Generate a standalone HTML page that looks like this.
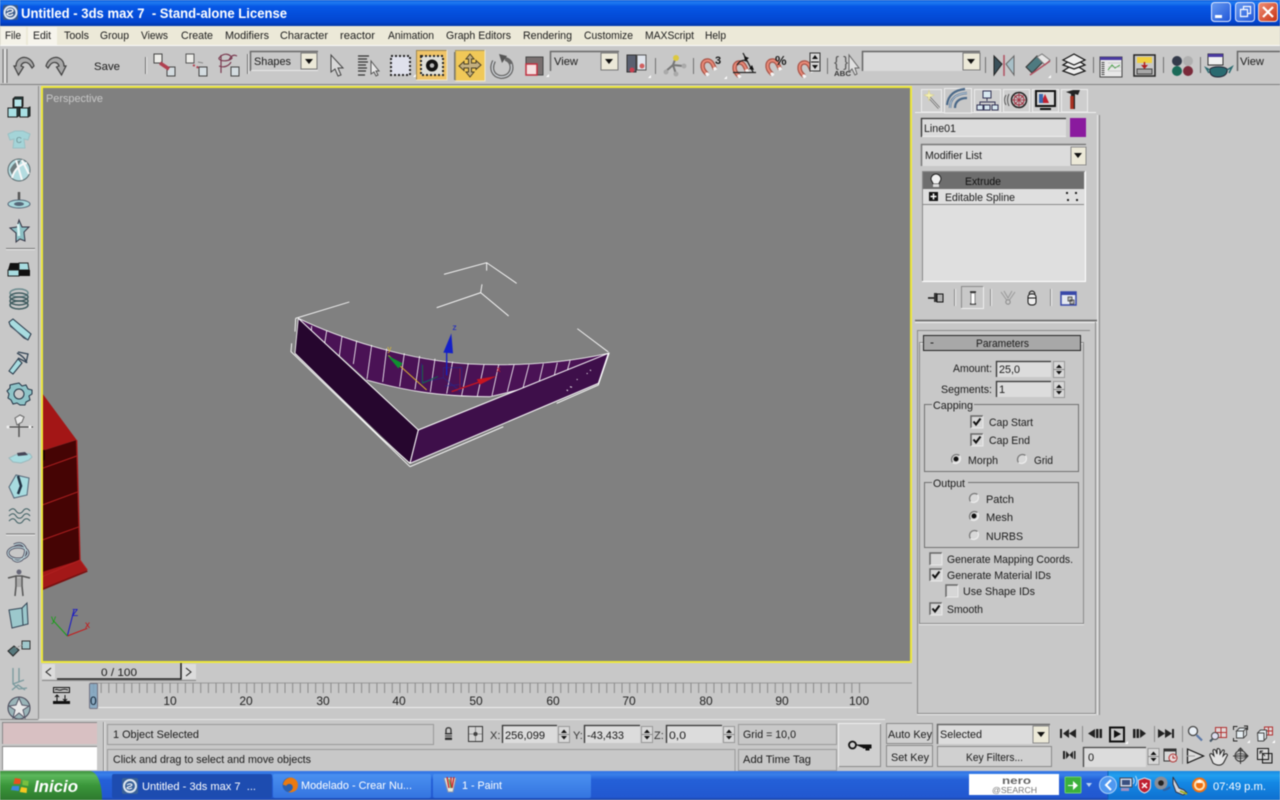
<!DOCTYPE html>
<html><head><meta charset="utf-8"><title>Untitled - 3ds max 7</title>
<style>
html,body{margin:0;padding:0;background:#c8c8c8;overflow:hidden}
svg{display:block;filter:blur(.4px)}
text{font-family:"Liberation Sans",sans-serif;font-size:11px;fill:#1a1a1a}
.w{fill:#fff}
</style></head><body>
<svg width="1280" height="800" viewBox="0 0 1280 800" xmlns="http://www.w3.org/2000/svg">
<defs>
<linearGradient id="tb" x1="0" y1="0" x2="0" y2="1"><stop offset="0" stop-color="#0a5be0"/><stop offset=".1" stop-color="#1f7bf0"/><stop offset=".25" stop-color="#0657e6"/><stop offset=".85" stop-color="#0345cf"/><stop offset="1" stop-color="#0236a8"/></linearGradient>
<linearGradient id="task" x1="0" y1="0" x2="0" y2="1"><stop offset="0" stop-color="#2b6fe0"/><stop offset=".12" stop-color="#3a80ea"/><stop offset=".3" stop-color="#2460d8"/><stop offset=".9" stop-color="#2258d0"/><stop offset="1" stop-color="#1a45a8"/></linearGradient>
<linearGradient id="tray" x1="0" y1="0" x2="0" y2="1"><stop offset="0" stop-color="#1a88e0"/><stop offset=".15" stop-color="#22a0f0"/><stop offset=".4" stop-color="#1488e4"/><stop offset="1" stop-color="#0f70d0"/></linearGradient>
<linearGradient id="start" x1="0" y1="0" x2="0" y2="1"><stop offset="0" stop-color="#3c8e3c"/><stop offset=".15" stop-color="#5cb85c"/><stop offset=".5" stop-color="#3a963a"/><stop offset="1" stop-color="#2e7a2e"/></linearGradient>
<linearGradient id="tbtn" x1="0" y1="0" x2="0" y2="1"><stop offset="0" stop-color="#4a90f0"/><stop offset="1" stop-color="#3474e0"/></linearGradient>
<linearGradient id="xb" x1="0" y1="0" x2="1" y2="1"><stop offset="0" stop-color="#f09078"/><stop offset="1" stop-color="#c83010"/></linearGradient>
<linearGradient id="bb" x1="0" y1="0" x2="1" y2="1"><stop offset="0" stop-color="#6a9cf0"/><stop offset="1" stop-color="#1f55d8"/></linearGradient>
<g id="spin"><rect width="11" height="16" fill="#d8d8d8" stroke="#989898"/><path d="M5.500 3l3 3.500h-6zM5.500 13l3-3.500h-6z" fill="#111"/><path d="M0 8h11" stroke="#888"/></g>
<g id="cb"><rect width="12" height="12" fill="#d6d6d6"/><path d="M0 12V0h12" fill="none" stroke="#666" stroke-width="1.500"/><path d="M12 0v12H0" fill="none" stroke="#e8e8e8"/></g>
<path id="tick" d="M2.500 5.500l2.500 3 4.500-6" fill="none" stroke="#111" stroke-width="2"/>
<g id="rad"><circle r="5" fill="#d8d8d8"/><path d="M-3.500 3.500A5 5 0 0 1 3.500-3.500" fill="none" stroke="#777" stroke-width="1.300"/><path d="M3.500-3.500A5 5 0 0 1-3.500 3.500" fill="none" stroke="#f0f0f0"/></g>
<g id="mag"><path d="M7 15C0 9 2 1 8 1.500 12 2 13 6 15 10" fill="none" stroke="#a85448" stroke-width="4.500"/><path d="M7 15C0 9 2 1 8 1.500 12 2 13 6 15 10" fill="none" stroke="#e88a78" stroke-width="2"/><path d="M6 14l2.500 2.500M13.500 10.500l3-1.500" stroke="#f4f4f4" stroke-width="3"/></g>
</defs>

<!-- Base -->
<rect width="1280" height="800" fill="#c8c8c8"/>

<!-- Title bar -->
<rect width="1280" height="26" fill="url(#tb)"/>
<rect x="3" y="5" width="15" height="15" rx="2" fill="#3a5a88"/>
<circle cx="10.500" cy="12.500" r="6" fill="none" stroke="#dfe8f4" stroke-width="2"/>
<path d="M7 11c2-3 6-2 6 0-1 2-5 1-6 3 1 2 4 2 6 0" fill="none" stroke="#fff" stroke-width="1.300"/>
<text x="21" y="18" textLength="266" lengthAdjust="spacingAndGlyphs" xml:space="preserve" style="font-size:13.500px;font-weight:bold;fill:#fff">Untitled - 3ds max 7  - Stand-alone License</text>
<rect x="1211.500" y="2.500" width="19" height="19" rx="3" fill="url(#bb)" stroke="#dfe8ff"/>
<rect x="1215" y="15" width="7" height="3" fill="#fff"/>
<rect x="1235.500" y="2.500" width="19" height="19" rx="3" fill="url(#bb)" stroke="#dfe8ff"/>
<path d="M1240.500 9.500h7v7h-7zM1243.500 9.500v-3h7v7h-3" fill="none" stroke="#fff" stroke-width="1.200"/>
<rect x="1258.500" y="2.500" width="19" height="19" rx="3" fill="url(#xb)" stroke="#f4d8d0"/>
<path d="M1263 7l10 10M1273 7l-10 10" stroke="#fff" stroke-width="2.200"/>

<!-- Menu bar -->
<rect y="26" width="1280" height="19" fill="#ece9d8"/>
<rect y="45" width="1280" height="1" fill="#fafafa"/>
<rect x="1" y="27" width="25" height="18" fill="#f4f2e8"/><rect x="28" y="27" width="29" height="18" fill="#f6f4ec"/>
<text x="5" y="39" textLength="16" lengthAdjust="spacingAndGlyphs">File</text>
<text x="33" y="39" textLength="18" lengthAdjust="spacingAndGlyphs">Edit</text>
<text x="64" y="39" textLength="25" lengthAdjust="spacingAndGlyphs">Tools</text>
<text x="100" y="39" textLength="29" lengthAdjust="spacingAndGlyphs">Group</text>
<text x="141" y="39" textLength="27" lengthAdjust="spacingAndGlyphs">Views</text>
<text x="181" y="39" textLength="32" lengthAdjust="spacingAndGlyphs">Create</text>
<text x="225" y="39" textLength="44" lengthAdjust="spacingAndGlyphs">Modifiers</text>
<text x="280" y="39" textLength="48" lengthAdjust="spacingAndGlyphs">Character</text>
<text x="340" y="39" textLength="35" lengthAdjust="spacingAndGlyphs">reactor</text>
<text x="388" y="39" textLength="46" lengthAdjust="spacingAndGlyphs">Animation</text>
<text x="446" y="39" textLength="65" lengthAdjust="spacingAndGlyphs">Graph Editors</text>
<text x="523" y="39" textLength="49" lengthAdjust="spacingAndGlyphs">Rendering</text>
<text x="584" y="39" textLength="49" lengthAdjust="spacingAndGlyphs">Customize</text>
<text x="645" y="39" textLength="49" lengthAdjust="spacingAndGlyphs">MAXScript</text>
<text x="705" y="39" textLength="21" lengthAdjust="spacingAndGlyphs">Help</text>

<!-- Toolbar -->
<rect x="0" y="84" width="1280" height="1" fill="#808080"/>
<path d="M3 49v34M7 49v34" stroke="#707070"/>
<path d="M5 49v34" stroke="#f0f0f0"/>
<g fill="none" stroke="#404040" stroke-width="1.200">
<path d="M14 66l4.500 9 5-8-2.500-1c1-4 6-5 9-1l2 3 2-2c-2-7-8-10-13-8-4 2-5 5-5 8z" fill="#a8a8a8"/>
<path d="M66 66l-4.500 9-5-8 2.500-1c-1-4-6-5-9-1l-2 3-2-2c2-7 8-10 13-8 4 2 5 5 5 8z" fill="#a8a8a8"/>
</g>
<text x="94" y="70" textLength="26" lengthAdjust="spacingAndGlyphs">Save</text>
<path d="M145.500 57v17M247.500 54v20M454.500 52v28M655.500 58v16M693.500 58v16M827.500 58v16M985.500 57v16M1056.500 57v16M1093.500 57v16M1163.500 57v16M1200.500 57v16" stroke="#707070"/>
<path d="M146.500 57v17M248.500 54v20M455.500 52v28" stroke="#efefef"/>
<!-- link icons -->
<rect x="154" y="54" width="8" height="9" fill="#ecece8" stroke="#444"/><rect x="167" y="67" width="8" height="9" fill="#d4dce0" stroke="#444"/>
<path d="M160 63l9 6" stroke="#b04050" stroke-width="3.500"/>
<rect x="186" y="54" width="8" height="9" fill="#ecece8" stroke="#555"/><rect x="199" y="67" width="8" height="9" fill="#d4dce0" stroke="#444"/>
<path d="M193 65l6 3" stroke="#b04050" stroke-width="2" stroke-dasharray="2 2"/><path d="M203 63l-5-1" stroke="#888"/>
<path d="M219 58c5-6 11-4 13 0-2 3-10 4-13 1zM219 66c5 2 10 0 12-4M221 55v18M229 60c3-6 6-5 8-4" fill="none" stroke="#7a3a50" stroke-width="1.200"/>
<rect x="231" y="67" width="8" height="9" fill="#d4dce0" stroke="#444"/>
<!-- Shapes -->
<rect x="250" y="51" width="68" height="20" fill="#c8c8c8"/><path d="M250.500 71V51.500H318" fill="none" stroke="#6a6a6a" stroke-width="1.500"/>
<path d="M251 70.500h67" stroke="#e8e8e8"/>
<text x="254" y="65" textLength="37" lengthAdjust="spacingAndGlyphs">Shapes</text>
<rect x="301" y="53" width="16" height="16" fill="#ece9d8" stroke="#777"/><path d="M305 59h8l-4 5z" fill="#111"/>
<!-- arrow select -->
<path d="M331 55v17l4-3 3 7 3-1-3-7h5z" fill="#d8d8d8" stroke="#444"/>
<path d="M358 56h11M358 59h9M358 62h10M358 65h8M358 68h9M358 71h8M358 75h7" stroke="#333" stroke-width="1.300"/>
<path d="M371 61v13l3-2 2 4 2-1-2-4h3z" fill="#e8e8e8" stroke="#555"/>
<rect x="391" y="56" width="19" height="19" fill="#dfe1ec" stroke="#222" stroke-width="2" stroke-dasharray="2 2"/>
<path d="M413 77h3v-3z" fill="#fff"/>
<rect x="416" y="50" width="31" height="30" fill="#f0c468"/>
<path d="M416.500 80V50.500H447" fill="none" stroke="#a08850"/><path d="M447 50v30H416" fill="none" stroke="#efe4c4"/>
<rect x="421" y="56" width="22" height="19" fill="#dfdfd8" stroke="#222" stroke-width="2" stroke-dasharray="2 2"/>
<circle cx="432" cy="65.500" r="6" fill="#111"/><circle cx="432" cy="65.500" r="2.300" fill="#b8b8b8"/>
<!-- move -->
<rect x="455" y="50" width="30" height="31" fill="#f0c858"/>
<path d="M455.500 81V50.500H485" fill="none" stroke="#a89860"/><path d="M485 50v31H455" fill="none" stroke="#f0e8cc"/>
<path d="M470 54l4 5h-2.500v4H476v-2.500l5 4.500-5 4.500V68h-4.500v4h2.500l-4 5-4-5h2.500v-4H464v2.500L459 66l5-4.500V64h4.500v-5H466z" fill="#c4b080" stroke="#4a4026"/>
<!-- rotate -->
<path d="M494 61c-4 8-1 15 7 16 8 0 12-6 10-13-1-3-4-5-6-5" fill="none" stroke="#666" stroke-width="4"/>
<path d="M494 61c-4 8-1 15 7 16 8 0 12-6 10-13" fill="none" stroke="#d0d4d8" stroke-width="1.400"/>
<path d="M499 54l8 2-5 7z" fill="#555"/>
<!-- scale -->
<rect x="526" y="57" width="17" height="18" fill="#787070" stroke="#444"/><rect x="526" y="64" width="11" height="11" fill="#f4e0e0" stroke="#c03040" stroke-width="1.500"/>
<path d="M546 77h3v-3z" fill="#fff"/>
<!-- View dropdown -->
<rect x="550" y="51" width="69" height="20" fill="#c8c8c8"/><path d="M550.500 71V51.500H619" fill="none" stroke="#6a6a6a" stroke-width="1.500"/>
<text x="554" y="65" textLength="24" lengthAdjust="spacingAndGlyphs">View</text>
<rect x="601" y="53" width="17" height="17" fill="#ece9d8" stroke="#777"/><path d="M605 59h8l-4 5z" fill="#111"/>
<rect x="627" y="55" width="9" height="17" fill="#5a6070" stroke="#333"/><rect x="637" y="55" width="9" height="15" fill="#dfe4ec" stroke="#555"/>
<circle cx="632" cy="70" r="2.500" fill="#c84050"/><circle cx="642" cy="66" r="2.500" fill="#d06060"/>
<path d="M648 78h3v-3z" fill="#fff"/>
<!-- manipulate -->
<path d="M665 72l8-7 3-8M673 65l10 1M673 65l3 9" stroke="#777" stroke-width="2" fill="none"/>
<circle cx="676" cy="58" r="3" fill="#dcc840"/><circle cx="684" cy="66" r="2.500" fill="#aaa"/><circle cx="666" cy="72" r="2.500" fill="#aaa"/><circle cx="676" cy="74" r="2.500" fill="#aaa"/>
<!-- snaps -->
<use href="#mag" x="700" y="59"/>
<text x="715" y="64" style="font-size:11px;font-weight:bold">3</text>
<path d="M724 79h3v-3z" fill="#fff"/>
<use href="#mag" x="732" y="61"/>
<path d="M733 72.500h23M743 53l10 19M737 65c3-5 8-6 11-3" fill="none" stroke="#222" stroke-width="1.300"/>
<path d="M744 56l5 2-4 3zM749 69l3-4 2 5z" fill="#111"/>
<use href="#mag" x="765" y="59"/>
<text x="775" y="65" style="font-size:13px;font-weight:bold">%</text>
<use href="#mag" x="797" y="61"/>
<rect x="810" y="53" width="10" height="18" fill="#d8d8d8" stroke="#333"/><path d="M815 55l3 4h-6zM815 69l3-4h-6z" fill="#111"/><path d="M811 62h8" stroke="#111"/>
<!-- named sel -->
<text x="834" y="67" style="font-size:15px;fill:#555">{ }</text>
<text x="834" y="76" textLength="17" lengthAdjust="spacingAndGlyphs" style="font-size:7px;font-weight:bold;fill:#333">ABC</text>
<path d="M849 55v17l3-3 3 6 2-1-2-6h4z" fill="#e0e0e0" stroke="#666"/>
<rect x="862" y="51" width="118" height="20" fill="#dadada"/><path d="M862.500 71V51.500H980" fill="none" stroke="#666" stroke-width="1.500"/>
<rect x="963" y="53" width="17" height="17" fill="#ece9d8" stroke="#777"/><path d="M967 59h8l-4 5z" fill="#111"/>
<!-- mirror -->
<path d="M994 56l8 8-8 11z" fill="#39505a" stroke="#222"/><path d="M1014 56l-8 8 8 11z" fill="#a8c0c8" stroke="#666"/><path d="M1004 55v21" stroke="#b05060" stroke-width="1.500"/>
<!-- align -->
<path d="M1026 67l11-11 6 6-11 11z" fill="#4e7a80" stroke="#333"/><path d="M1037 57l5-3 8 6-5 5z" fill="#e6e6e6" stroke="#777"/><path d="M1030 75l20-14" stroke="#b05060" stroke-width="1.400"/>
<path d="M1048 78h3v-3z" fill="#fff"/>
<!-- layers -->
<g fill="#eee" stroke="#111" stroke-width="1.200"><path d="M1063 71l11-7 11 7-11 4z"/><path d="M1063 65l11-7 11 7-11 4z"/><path d="M1063 60l11-6 11 6-11 5z"/></g>
<!-- curve editor -->
<rect x="1100" y="57" width="22" height="20" fill="#e8e8e8" stroke="#444"/><rect x="1100" y="57" width="22" height="3" fill="#4a3aa0"/><path d="M1103 62v13" stroke="#444" stroke-dasharray="1 1" stroke-width="3"/><path d="M1108 70l4-5 3 3 5-3" fill="none" stroke="#40a040"/><path d="M1108 63h13M1108 67h13M1108 71h13" stroke="#aaa" stroke-width=".6"/>
<!-- schematic -->
<rect x="1134" y="55" width="21" height="21" fill="#c8c8c8" stroke="#222" stroke-width="1.500"/><rect x="1137" y="57" width="15" height="6" fill="#f0d040"/><rect x="1137" y="69" width="15" height="5" fill="#a8a8a8" stroke="#444"/><path d="M1144.500 62v6" stroke="#b02020" stroke-width="1.500"/><path d="M1141 65h7l-3.500 4z" fill="#b02020"/>
<!-- material -->
<circle cx="1177" cy="61" r="5" fill="#333a4a"/><circle cx="1188" cy="61" r="5" fill="#b0b0b0"/><circle cx="1177" cy="71" r="5" fill="#1a6a58"/><circle cx="1188" cy="71" r="5" fill="#7a2a3a"/>
<!-- render -->
<rect x="1208" y="54" width="15" height="11" fill="#f0f0f0" stroke="#333"/><rect x="1208" y="54" width="15" height="3" fill="#4a3aa0"/>
<path d="M1210 69c3-3 14-3 17 0 1 5-3 8-9 8s-9-3-8-8z" fill="#2a6a70" stroke="#223"/><path d="M1227 70l5-3-3 6M1210 70l-4-2 3 5" fill="none" stroke="#2a6a70" stroke-width="1.500"/>
<rect x="1237" y="51" width="43" height="20" fill="#c8c8c8"/><path d="M1237.500 71V51.500H1280" fill="none" stroke="#666" stroke-width="1.500"/>
<text x="1240" y="65" textLength="24" lengthAdjust="spacingAndGlyphs">View</text>

<!-- Left command toolbar -->
<path d="M38.500 86V719" stroke="#8a8a8a"/>
<g stroke="#222" stroke-width="1">
<rect x="13" y="99" width="9" height="9" fill="#a8e0e4"/>
<path d="M13 99l2-2h8v9l-1 2h-1" fill="#244"/>
<rect x="14" y="99" width="8" height="8" fill="#b4e4e8"/>
<rect x="8" y="108" width="9" height="9" fill="#a8e0e4"/><path d="M17 108l2-1v9l-2 1z" fill="#244"/>
<rect x="20" y="108" width="8" height="9" fill="#a8e0e4"/><path d="M28 108l2-1v9l-2 1z" fill="#244"/>
</g>
<path d="M8 134l7-3h8l7 3-2 6-4-1 1 9H13l1-9-4 1z" fill="#a4d4d8" stroke="#9ac0c4"/>
<text x="16" y="143" style="font-size:8px;fill:#6a8a8e">C</text>
<circle cx="19" cy="170" r="11" fill="#b4dce0" stroke="#5a6a6e"/><path d="M10 170c2-5 6-9 11-10l-8 17z" fill="#6e7c7e"/><path d="M12 178c2-8 8-14 15-15M16 160l6 20M22 160l7 14" fill="none" stroke="#f8f8f8" stroke-width="2"/>
<path d="M19 192v11" stroke="#555" stroke-width="2.500"/><ellipse cx="19" cy="204" rx="11" ry="4" fill="#a8d8dc" stroke="#567"/><ellipse cx="19" cy="204" rx="5" ry="2" fill="#567"/>
<path d="M19 220l3 7 7 0-5 5 1 9-5-2-4 3 0-9-6-5 7-1z" fill="#8cc0c4" stroke="#334"/><path d="M18 224l1 12" stroke="#dcf4f4" stroke-width="2.500"/>
<path d="M6 248.500h29" stroke="#777"/><path d="M6 249.500h29" stroke="#eee"/>
<path d="M10 263h9v7H8z" fill="#111"/><path d="M19 263h9l1 7H19z" fill="#a8dce0" stroke="#222"/><path d="M8 270h11v6H8z" fill="#a8dce0" stroke="#222"/><path d="M19 270h11v6H19z" fill="#111"/>
<g fill="none" stroke="#3e5a5e" stroke-width="1.500"><ellipse cx="19" cy="293" rx="9" ry="4" stroke="#6a8a8e"/><ellipse cx="19" cy="297" rx="9" ry="4"/><ellipse cx="19" cy="301" rx="9" ry="4"/><ellipse cx="19" cy="305" rx="9" ry="4"/></g>
<path d="M9 322l4-3 18 15-3 6-4-2-14-13z" fill="#a8dce0" stroke="#234"/><path d="M10 326l18 14" stroke="#456"/>
<path d="M9 371l9-12 4 4-9 11z" fill="#a8dce0" stroke="#234"/><path d="M18 352l10 2-2 9M17 353c4 2 8 5 10 10M18 358l8 4" fill="none" stroke="#345" stroke-width="1.300"/>
<path d="M19 383l3 3 4-1 2 4 4 1v4l-3 2 1 4-4 2-1 3h-5l-3-2-4 1-2-4-3-2 1-4-2-3 3-3 0-3 4-1z" fill="#8ec4c8" stroke="#234"/><circle cx="19" cy="394" r="5" fill="#c8c8c8" stroke="#234"/>
<path d="M7 427h26" stroke="#333"/><path d="M19 420v17" stroke="#555" stroke-width="1.500"/><path d="M15 418l5-3 4 2-2 5-5 3z" fill="#e8e8e8" stroke="#666"/><circle cx="8" cy="427" r="1.500" fill="#eee"/><circle cx="30" cy="427" r="1.500" fill="#eee"/>
<path d="M9 458l6-3 8-2 7 1 2 3-3 3-8 3-8-1z" fill="#a8dce0" stroke="#9ab8bc"/><path d="M17 453l8-1 3 3-10 1z" fill="#445"/>
<path d="M9 487l7-12 13 3-2 17-13 3z" fill="#a8dce0" stroke="#567"/><path d="M18 476l3 10-3 8" stroke="#234" stroke-width="2.500" fill="none"/>
<g fill="none" stroke="#3e5e62" stroke-width="1.100"><path d="M9 511c3-3 5-3 7 0s5 3 7 0 5-3 7 0"/><path d="M9 516c3-3 5-3 7 0s5 3 7 0 5-3 7 0"/><path d="M9 521c3-3 5-3 7 0s5 3 7 0 5-3 7 0"/></g>
<path d="M6 534h29" stroke="#777"/><path d="M6 535h29" stroke="#eee"/>
<g fill="none"><ellipse cx="18" cy="553" rx="10" ry="6" stroke="#556" stroke-width="3"/><path d="M14 545c8-4 13 2 11 9s-8 9-12 5" stroke="#556" stroke-width="3"/><ellipse cx="18" cy="553" rx="10" ry="6" stroke="#c8e4e8" stroke-width="1"/><path d="M14 545c8-4 13 2 11 9s-8 9-12 5" stroke="#c8e4e8"/></g>
<circle cx="19" cy="572" r="2.500" fill="#667"/><path d="M8 578l8-2h6l8 2M16 576l0 10-1 10M22 576l0 10 1 10" fill="none" stroke="#555" stroke-width="1.500"/><path d="M17 578h4v9h-4z" fill="#aaa"/>
<path d="M9 610l13-2 5-5 1 21-16 4z" fill="#9cc8cc" stroke="#345"/><path d="M22 608l1 17" stroke="#345"/>
<path d="M8 651l6-5 5 4-6 6z" fill="#56787c" stroke="#222"/><rect x="22" y="641" width="8" height="8" fill="#a0c8cc" stroke="#333"/><path d="M15 648l8-3" stroke="#888" stroke-dasharray="2 1"/>
<path d="M13 668v16l6 5 8-1M13 684l11-4M19 668v14M12 690l6-5 7 5" fill="none" stroke="#7a9a9e" stroke-width="1.300"/>
<circle cx="19" cy="708" r="11" fill="#9ab4b8" stroke="#445"/><path d="M19 698l3 7 7 1-6 4 2 8-6-5-6 5 2-8-6-4 7-1z" fill="#e8e8e8" stroke="#556"/>

<!-- Viewport -->
<rect x="41" y="86" width="871" height="577" fill="#808080"/>
<!-- red object -->
<g transform="translate(0 390) scale(.33333)">
<path d="M127 10L230 150 135 180H127z" fill="#a31616"/>
<path d="M127 180h8L230 150l10 360-113 50z" fill="#450404"/>
<path d="M127 180h8l0 30-8 2z" fill="#200"/>
<path d="M130 545l110-35 22 30-135 60z" fill="#a31818"/>
<path d="M127 235L230 198M127 345L235 305M127 450L238 410M127 560l113-50 22 30" fill="none" stroke="#b02020" stroke-width="3"/>
<path d="M230 150l10 360" fill="none" stroke="#a81c1c" stroke-width="4"/>
<path d="M127 598l135-55" stroke="#7a1010" stroke-width="5"/>
</g>
<rect x="41" y="86" width="2" height="577" fill="#f0e030"/>
<text x="46" y="102" textLength="57" lengthAdjust="spacingAndGlyphs" style="fill:#c8c8c8">Perspective</text>
<!-- yellow border -->
<path d="M42 87H911V662H42z" fill="none" stroke="#ede83a" stroke-width="2"/>
<!-- tripod -->
<g transform="translate(0 390) scale(.33333)" fill="none" stroke-width="3">
<path d="M202 738L222 660" stroke="#1414c8"/><path d="M202 738L262 715" stroke="#c81414"/><path d="M202 738L160 692" stroke="#14a014"/>
</g>
<text x="72" y="616" style="font-size:10px;fill:#1414c8">Z</text><text x="85" y="628" style="font-size:10px;fill:#c81414">x</text><text x="51" y="622" style="font-size:10px;fill:#14a014">y</text>

<!-- 3D model -->
<g transform="translate(270 250) scale(.33333)">
<g fill="none" stroke="#fff" stroke-width="2.600">
<path d="M522 73L650 38 740 100M650 38V62"/>
<path d="M500 173L632 128 716 198M632 128l4-25"/>
<path d="M77 205L238 156M77 205l-2 40M922 236l93 70"/>
<path d="M65 280L63 305 420 650M860 460L985 405 1018 308"/>
<path d="M420 650L700 530"/>
</g>
<path d="M85 205C200 260 400 330 600 342C760 350 900 335 1015 310C900 370 800 410 660 440C500 440 400 420 290 390z" fill="#4a1255"/>
<g stroke="#fff" stroke-width="2.400" fill="none">
<path d="M85 205C200 260 400 330 600 342C760 350 900 335 1015 310"/>
<path d="M290 390C400 420 500 440 660 440C800 410 900 370 1015 310"/>
<path d="M125 228l-2 30M170 243l-8 50M216 258l-8 60M260 272l-10 70M305 285l-14 102M350 296l-12 100M403 310l-14 100M449 318l-14 100M495 326l-14 100M548 335l-18 96M595 340l-20 96M642 344l-20 94M686 345l-20 92M732 345l-20 80M777 344l-18 70M820 341l-14 60M862 338l-12 50M900 332l-8 30"/>
</g>
<path d="M85 205L445 540 420 640 75 310z" fill="#26062e"/>
<path d="M85 205L445 540 420 640" fill="none" stroke="#fff" stroke-width="3"/>
<path d="M85 205L75 310" fill="none" stroke="#fff" stroke-width="2.400"/>
<path d="M75 310L330 560 420 640" fill="none" stroke="#fff" stroke-width="3"/>
<path d="M445 540L1015 310 985 400 420 640z" fill="#3e0f4a"/>
<path d="M445 540L1015 310 985 400 420 640" fill="none" stroke="#fff" stroke-width="3"/>
<path d="M445 540L420 640" stroke="#fff" stroke-width="3"/>
<path d="M890 420l4 2M920 388l3 1M950 370l3 1M960 360l3 2M900 410l6 2" stroke="#fff" stroke-width="3"/>
<path d="M530 305L530 376" stroke="#1420c8" stroke-width="4"/>
<path d="M520 308L544 250 549 310z" fill="#1420c8"/>
<text x="547" y="240" style="font-size:26px;fill:#1420c8">z</text>
<path d="M355 316L470 420" stroke="#d8b030" stroke-width="3"/>
<path d="M352 316L398 340 385 355z" fill="#0f9030"/>
<text x="352" y="305" style="font-size:24px;fill:#e0c030">y</text>
<path d="M545 425L660 385" stroke="#c81420" stroke-width="4"/>
<path d="M620 388L680 378 630 404z" fill="#c81420"/>
<text x="680" y="366" style="font-size:24px;fill:#d02030">x</text>
<path d="M455 340v58l50-20M455 398l65-15v-30l55 0v50l-50 5M520 383l50 40V350" fill="none" stroke="#1a30a0" stroke-width="2" opacity=".7"/>
<path d="M458 345v55l45-20" fill="none" stroke="#108030" stroke-width="2"/>
<path d="M570 355v60l-25 10" fill="none" stroke="#b01828" stroke-width="2"/>
</g>

<!-- Time slider -->
<rect x="42" y="664" width="13" height="15" fill="#dcdcdc"/><path d="M51 668l-5 4 5 4" fill="none" stroke="#222"/>
<rect x="57" y="663" width="124" height="16" fill="#c8c8c8"/><path d="M57 679h124V663" fill="none" stroke="#222" stroke-width="1.500"/>
<text x="101" y="676" textLength="36" lengthAdjust="spacingAndGlyphs">0 / 100</text>
<rect x="182" y="664" width="14" height="15" fill="#dcdcdc"/><path d="M186 668l5 4-5 4" fill="none" stroke="#222"/>
<path d="M42 680.500H196" stroke="#888"/>
<path d="M90 683H912" stroke="#9a9a9a"/>
<path d="M93 688H860" stroke="#8a8a8a" stroke-width="10" stroke-dasharray="1 6.660"/>
<path d="M93 707.500H860" stroke="#eeeeee"/>
<g>
<text x="170" y="705" text-anchor="middle" style="font-size:12px;fill:#222">10</text>
<text x="246" y="705" text-anchor="middle" style="font-size:12px;fill:#222">20</text>
<text x="323" y="705" text-anchor="middle" style="font-size:12px;fill:#222">30</text>
<text x="399" y="705" text-anchor="middle" style="font-size:12px;fill:#222">40</text>
<text x="476" y="705" text-anchor="middle" style="font-size:12px;fill:#222">50</text>
<text x="553" y="705" text-anchor="middle" style="font-size:12px;fill:#222">60</text>
<text x="629" y="705" text-anchor="middle" style="font-size:12px;fill:#222">70</text>
<text x="706" y="705" text-anchor="middle" style="font-size:12px;fill:#222">80</text>
<text x="782" y="705" text-anchor="middle" style="font-size:12px;fill:#222">90</text>
<text x="859" y="705" text-anchor="middle" style="font-size:12px;fill:#222">100</text>
</g>
<rect x="89.500" y="683.500" width="8" height="25" rx="1" fill="#7fa4c0" stroke="#667" opacity=".85"/>
<text x="90" y="705" style="font-size:12px;fill:#123">0</text>
<g stroke="#111" fill="none"><rect x="53.500" y="687.500" width="16" height="5"/><path d="M55 690c2-2 3 1 6 0s4-1 7 0"/><path d="M57 695v6M55 697l2-2 2 2M65 695v6M63 699l2 2 2-2"/></g><rect x="53" y="701" width="17" height="3" fill="#111"/>
<path d="M39 719.500H885" stroke="#e6e6e6"/>
<path d="M38 719.500H0" stroke="#888"/>

<!-- Right panel -->
<path d="M915 112.500H1096" stroke="#f0f0f0"/>
<g fill="#cecece" stroke="#ededed">
<path d="M921.500 112V89.500h20V112z"/><path d="M974.500 112V89.500h26V112z"/><path d="M1003.500 112V89.500h26V112z"/><path d="M1032.500 112V89.500h26V112z"/><path d="M1061.500 112V89.500h26V112z"/>
<path d="M944.500 113V88.500h27V113z" fill="#c8c8c8"/>
</g>
<path d="M928 96l11 12" stroke="#666" stroke-width="2.500"/><path d="M928 96l11 12" stroke="#ddd" stroke-width="1"/><path d="M929 90l1 4 4 1-4 2-1 4-1-4-4-2 4-1z" fill="#f4f0b0" stroke="#d8d090" stroke-width=".6"/>
<path d="M950 108c0-9 5-14 17-15M955 108c0-6 4-10 12-10M947 105c1-10 8-15 18-16" fill="none" stroke="#4a6888" stroke-width="2.200"/><path d="M950 108c0-9 5-14 17-15" fill="none" stroke="#c0d0e0"/>
<rect x="983" y="91" width="8" height="7" fill="#d8e8f0" stroke="#335"/><path d="M987 98v3M980 105v-3h15v3" fill="none" stroke="#335"/><rect x="977" y="105" width="6" height="5" fill="#d8e8f0" stroke="#335"/><rect x="984" y="105" width="6" height="5" fill="#d8e8f0" stroke="#335"/><rect x="992" y="105" width="6" height="5" fill="#d8e8f0" stroke="#335"/>
<circle cx="1019" cy="100" r="7.500" fill="#c8c8c8" stroke="#222" stroke-width="1.500"/><circle cx="1019" cy="100" r="5" fill="none" stroke="#a03040"/><path d="M1019 93v14M1012 100h14M1014 95l10 10M1024 95l-10 10" stroke="#a03040" stroke-width=".8"/><path d="M1009 94c-2 4-2 8 0 12M1006 95c-2 3-2 7 0 10" fill="none" stroke="#555"/>
<rect x="1036" y="91" width="19" height="15" fill="#d8d8d8" stroke="#111" stroke-width="2"/><path d="M1045 94l4 9h-8z" fill="#c02030"/><rect x="1039" y="94" width="4" height="9" fill="#3a68b0"/><path d="M1040 109h11" stroke="#111" stroke-width="2"/>
<path d="M1066 92l7-2h7l-2 5-3-1v15h-4V94z" fill="#222"/><path d="M1072 96v13" stroke="#a83020" stroke-width="3.500"/>

<rect x="921" y="118" width="145" height="19" fill="#dcdcdc"/><path d="M921.500 137V118.500H1066" fill="none" stroke="#333" stroke-width="1.300"/>
<path d="M922 136.500h144" stroke="#efefef"/>
<text x="924" y="132" textLength="32" lengthAdjust="spacingAndGlyphs">Line01</text>
<rect x="1070" y="118" width="16" height="19" fill="#8a1a9e"/>
<rect x="921" y="144" width="165" height="22" fill="#dcdcdc"/><path d="M921.500 166V144.500H1086" fill="none" stroke="#777" stroke-width="1.500"/>
<text x="925" y="159" textLength="57" lengthAdjust="spacingAndGlyphs">Modifier List</text>
<rect x="1071" y="147" width="15" height="18" fill="#ece9d8" stroke="#888"/><path d="M1074 153h8l-4 5z" fill="#111"/>
<rect x="922" y="171" width="164" height="111" fill="#dfdfdf"/>
<path d="M922.500 282V171.500H1086" fill="none" stroke="#8a8a8a"/><path d="M1085.500 171V281.500H922" fill="none" stroke="#fff"/>
<rect x="923" y="172" width="161" height="17" fill="#6e6e6e"/>
<path d="M931 179a5 5 0 1 1 10 0c0 2-2 3-2 5h-6c0-2-2-3-2-5z" fill="#f0f0f0" stroke="#222"/><rect x="933" y="184" width="6" height="3" fill="#ddd"/>
<text x="965" y="185" textLength="36" lengthAdjust="spacingAndGlyphs" style="fill:#111">Extrude</text>
<rect x="929" y="192" width="9" height="9" fill="#111"/><path d="M933.500 193.500v6M930.500 196.500h6" stroke="#fff" stroke-width="1.500"/>
<text x="945" y="201" textLength="70" lengthAdjust="spacingAndGlyphs">Editable Spline</text>
<path d="M923 204.500h161" stroke="#8a8a8a"/>
<rect x="1066" y="192" width="2" height="2" fill="#222"/><rect x="1075" y="192" width="2" height="2" fill="#222"/><rect x="1067" y="199" width="2" height="2" fill="#222"/><rect x="1076" y="199" width="2" height="2" fill="#222"/>
<path d="M928 298h6" stroke="#111" stroke-width="1.500"/><rect x="934" y="293" width="3" height="9" fill="#333"/><path d="M937 294h6v8h-6z" fill="#b0b0b0" stroke="#111"/>
<path d="M954.500 289v17M990.500 289v17M1050.500 289v17" stroke="#8a8a8a"/><path d="M955.500 289v17M991.500 289v17M1051.500 289v17" stroke="#efefef"/>
<path d="M961.500 308V286.500H983" fill="none" stroke="#8a8a8a"/><path d="M983.500 287v21.500H961" fill="none" stroke="#efefef"/>
<path d="M970 292h6M970 304h6" stroke="#222" stroke-width="1.500"/><rect x="971" y="293" width="4" height="11" fill="#fff" stroke="#444" stroke-width=".6"/>
<path d="M1001 292l7 10 7-10M1004 291l4 7 4-7" fill="none" stroke="#999"/><circle cx="1008" cy="302" r="2.200" fill="#c8c8c8" stroke="#888"/>
<rect x="1028" y="294" width="8" height="11" rx="3" fill="#eee" stroke="#111"/><path d="M1029 294c1-4 5-4 6 0M1028 298h8" fill="none" stroke="#111"/>
<rect x="1061" y="292" width="15" height="13" fill="#e4e8f0" stroke="#3848a8" stroke-width="1.500"/><rect x="1061" y="292" width="15" height="3" fill="#3848a8"/><path d="M1068 297h4v4h-4zM1070 300h4v4h-4z" fill="#bbb" stroke="#333" stroke-width=".7"/>
<path d="M915 320.500H1098" stroke="#666" stroke-width="1.500"/>
<path d="M915 322.500H1098" stroke="#efefef"/>
<path d="M1095.500 322V715M1099.500 115V715" stroke="#8a8a8a"/>
<path d="M1097.500 115V715" stroke="#e8e8e8"/>
<path d="M917.500 330V713" stroke="#8a8a8a"/>
<path d="M917 713.500H1096" stroke="#8a8a8a"/><path d="M917 714.500H1096" stroke="#ececec"/>
<path d="M917 330.500H1090" stroke="#8a8a8a"/>

<!-- Rollout -->
<rect x="919.500" y="343.500" width="164" height="281" fill="none" stroke="#ececec"/>
<rect x="919.500" y="342.500" width="164" height="281" fill="none" stroke="#8a8a8a"/>
<rect x="923.500" y="335.500" width="157" height="15" fill="#a8a8a8" stroke="#222"/>
<text x="930" y="346" style="font-size:12px">-</text>
<text x="976" y="347" textLength="53" lengthAdjust="spacingAndGlyphs">Parameters</text>
<text x="992" y="372" text-anchor="end" textLength="39" lengthAdjust="spacingAndGlyphs">Amount:</text>
<rect x="996" y="361" width="55" height="16" fill="#dcdcdc"/><path d="M996.500 377V361.500H1051" fill="none" stroke="#333" stroke-width="1.300"/>
<text x="999" y="373" textLength="21" lengthAdjust="spacingAndGlyphs">25,0</text>
<use href="#spin" x="1053.500" y="361.500"/>
<text x="992" y="393" text-anchor="end" textLength="51" lengthAdjust="spacingAndGlyphs">Segments:</text>
<rect x="996" y="381" width="55" height="16" fill="#dcdcdc"/><path d="M996.500 397V381.500H1051" fill="none" stroke="#333" stroke-width="1.300"/>
<text x="999" y="393">1</text>
<use href="#spin" x="1053.500" y="381.500"/>
<rect x="924.500" y="404.500" width="154" height="67" fill="none" stroke="#707070"/>
<rect x="932" y="400" width="42" height="10" fill="#c8c8c8"/>
<text x="933" y="409" textLength="40" lengthAdjust="spacingAndGlyphs">Capping</text>
<use href="#cb" x="971" y="416"/><use href="#tick" x="971" y="416"/>
<text x="989" y="426" textLength="44" lengthAdjust="spacingAndGlyphs">Cap Start</text>
<use href="#cb" x="971" y="434"/><use href="#tick" x="971" y="434"/>
<text x="989" y="444" textLength="41" lengthAdjust="spacingAndGlyphs">Cap End</text>
<use href="#rad" x="956" y="459"/><circle cx="956" cy="459" r="2.500" fill="#111"/>
<text x="968" y="464" textLength="30" lengthAdjust="spacingAndGlyphs">Morph</text>
<use href="#rad" x="1022" y="459"/>
<text x="1034" y="464" textLength="19" lengthAdjust="spacingAndGlyphs">Grid</text>
<rect x="924.500" y="482.500" width="154" height="65" fill="none" stroke="#707070"/>
<rect x="932" y="478" width="36" height="10" fill="#c8c8c8"/>
<text x="933" y="487" textLength="32" lengthAdjust="spacingAndGlyphs">Output</text>
<use href="#rad" x="974" y="498"/><text x="986" y="503" textLength="28" lengthAdjust="spacingAndGlyphs">Patch</text>
<use href="#rad" x="974" y="516"/><circle cx="974" cy="516" r="2.500" fill="#111"/><text x="986" y="521" textLength="27" lengthAdjust="spacingAndGlyphs">Mesh</text>
<use href="#rad" x="974" y="535"/><text x="986" y="540" textLength="37" lengthAdjust="spacingAndGlyphs">NURBS</text>
<use href="#cb" x="930" y="553"/>
<text x="947" y="563" textLength="126" lengthAdjust="spacingAndGlyphs">Generate Mapping Coords.</text>
<use href="#cb" x="930" y="569"/><use href="#tick" x="930" y="569"/>
<text x="947" y="579" textLength="104" lengthAdjust="spacingAndGlyphs">Generate Material IDs</text>
<use href="#cb" x="946" y="585"/>
<text x="963" y="595" textLength="72" lengthAdjust="spacingAndGlyphs">Use Shape IDs</text>
<use href="#cb" x="930" y="603"/><use href="#tick" x="930" y="603"/>
<text x="947" y="613" textLength="36" lengthAdjust="spacingAndGlyphs">Smooth</text>

<!-- Status bar -->
<rect x="2" y="722" width="95" height="22" fill="#d8c0c2"/><path d="M2.500 744V722.500H97" fill="none" stroke="#888"/>
<rect x="2" y="746" width="95" height="24" fill="#fff"/><path d="M2.500 770V746.500H97" fill="none" stroke="#888"/>
<path d="M103.500 722V771" stroke="#8a8a8a"/><path d="M104.500 722V771" stroke="#ececec"/>
<rect x="107.500" y="724.500" width="326" height="20" fill="#c8c8c8" stroke="#9a9a9a"/>
<text x="113" y="738" textLength="86" lengthAdjust="spacingAndGlyphs">1 Object Selected</text>
<path d="M107.500 771V749.500H735V771" fill="none" stroke="#9a9a9a"/>
<text x="113" y="763" textLength="198" lengthAdjust="spacingAndGlyphs">Click and drag to select and move objects</text>
<rect x="445" y="733" width="7" height="7" fill="#333"/><path d="M446 733v-3c0-3 5-3 5 0v3" fill="none" stroke="#333" stroke-width="1.300"/><path d="M445 735h7M445 737h7" stroke="#ccc"/>
<rect x="468.500" y="726.500" width="14" height="15" fill="#d4d4d4" stroke="#333"/><circle cx="475.500" cy="734" r="2" fill="#333"/><path d="M475.500 727v14M469 734h13" stroke="#555" stroke-width=".6"/>
<text x="490" y="739" style="font-size:11px;fill:#333">X:</text>
<rect x="502" y="725" width="55" height="18" fill="#dcdcdc"/><path d="M502.500 743V725.500H557" fill="none" stroke="#333" stroke-width="1.300"/>
<text x="505" y="739" textLength="40" lengthAdjust="spacingAndGlyphs">256,099</text>
<use href="#spin" x="558.500" y="726.500"/>
<text x="573" y="739" style="font-size:11px;fill:#333">Y:</text>
<rect x="584" y="725" width="56" height="18" fill="#dcdcdc"/><path d="M584.500 743V725.500H640" fill="none" stroke="#333" stroke-width="1.300"/>
<text x="587" y="739" textLength="37" lengthAdjust="spacingAndGlyphs">-43,433</text>
<use href="#spin" x="641.500" y="726.500"/>
<text x="654" y="739" style="font-size:11px;fill:#333">Z:</text>
<rect x="666" y="725" width="56" height="18" fill="#dcdcdc"/><path d="M666.500 743V725.500H722" fill="none" stroke="#333" stroke-width="1.300"/>
<text x="669" y="739" textLength="17" lengthAdjust="spacingAndGlyphs">0,0</text>
<use href="#spin" x="723.500" y="726.500"/>
<rect x="738.500" y="724.500" width="98" height="20" fill="#c8c8c8" stroke="#9a9a9a"/>
<text x="743" y="738" textLength="53" lengthAdjust="spacingAndGlyphs">Grid = 10,0</text>
<rect x="738.500" y="749.500" width="98" height="21" fill="#c8c8c8" stroke="#9a9a9a"/>
<text x="743" y="763" textLength="68" lengthAdjust="spacingAndGlyphs">Add Time Tag</text>
<rect x="838.500" y="723.500" width="42" height="43" fill="#d0d0d0" stroke="#8a8a8a"/>
<path d="M838.500 767V723.500H881" fill="none" stroke="#efefef"/>
<circle cx="852.500" cy="745" r="3.500" fill="none" stroke="#111" stroke-width="1.800"/><path d="M856 745h15v3h-2v2h-3v-2h-3" fill="#111" stroke="#111"/>
<rect x="886.500" y="723.500" width="46" height="20" fill="#d0d0d0" stroke="#8a8a8a"/>
<text x="888" y="738" textLength="44" lengthAdjust="spacingAndGlyphs">Auto Key</text>
<rect x="886.500" y="745.500" width="46" height="21" fill="#d0d0d0" stroke="#8a8a8a"/>
<text x="891" y="761" textLength="38" lengthAdjust="spacingAndGlyphs">Set Key</text>
<rect x="937" y="724" width="113" height="20" fill="#dcdcdc"/><path d="M937.500 744V724.500H1050" fill="none" stroke="#666" stroke-width="1.500"/>
<text x="940" y="738" textLength="42" lengthAdjust="spacingAndGlyphs">Selected</text>
<rect x="1033" y="726" width="16" height="17" fill="#ece9d8" stroke="#888"/><path d="M1037 732h8l-4 5z" fill="#111"/>
<rect x="937.500" y="746.500" width="114" height="20" fill="#d0d0d0" stroke="#8a8a8a"/>
<text x="966" y="761" textLength="57" lengthAdjust="spacingAndGlyphs">Key Filters...</text>
<!-- playback -->
<g fill="#222">
<path d="M1060 729h2v9h-2zM1069 729v9l-6-4.500zM1076 729v9l-7-4.500z"/>
<path d="M1095 729v9l-7-4.500zM1096 729h2.500v9h-2.500zM1099.500 729h2.500v9h-2.500z"/>
<path d="M1133 729h2.500v9h-2.500zM1136.500 729h2.500v9h-2.500zM1140 729v9l6-4.500z"/>
<path d="M1158 729v9l7-4.500zM1165 729v9l7-4.500zM1172 729h2v9h-2z"/>
<path d="M1063 751h2v8h-2zM1066 751v8l3.500-4zM1073 751v8l-3.500-4zM1074 751h1.500v8h-1.500z"/>
</g>
<rect x="1110" y="727.500" width="14" height="14" fill="none" stroke="#111" stroke-width="2"/><path d="M1114 730v8l7-4z" fill="#111"/><path d="M1125 744h3v-3z" fill="#fff"/>
<path d="M1082.500 726v16M1154.500 726v16M1182.500 726v16M1182.500 748v16" stroke="#8a8a8a"/>
<rect x="1083" y="747" width="63" height="20" fill="#dcdcdc"/><path d="M1083.500 767V747.500H1146" fill="none" stroke="#444" stroke-width="1.300"/>
<text x="1088" y="761">0</text>
<use href="#spin" x="1148" y="748.500"/>
<rect x="1164" y="749" width="12" height="12" fill="#d8d8d8" stroke="#333"/><rect x="1164" y="749" width="12" height="2.500" fill="#333"/><circle cx="1173" cy="758" r="4" fill="#e8d8d8" stroke="#b03030"/><path d="M1173 755.500v2.500h2.500" stroke="#b03030" fill="none"/>
<!-- nav row 1 -->
<circle cx="1193" cy="731" r="4.500" fill="#e8eef4" stroke="#444" stroke-width="1.300"/><path d="M1196.500 735l5.500 5.500" stroke="#5a78a8" stroke-width="2.200"/>
<path d="M1215.500 727.500h11v10h-11zM1221 727.500v10M1215.500 732.500h11" fill="#e0d8d8" stroke="#b03030"/><circle cx="1215" cy="736" r="3.500" fill="#dde" stroke="#444"/><path d="M1212.500 739l-2.500 2.500" stroke="#456" stroke-width="2"/>
<path d="M1236.500 731h7l3-3h-7zM1236.500 731v7h7v-7M1243.500 738l3-3v-7" fill="#e4ecf0" stroke="#444"/><path d="M1233.500 738v3h4M1248 726h-4M1247.500 726v4M1233.500 730v-3.500h4" fill="none" stroke="#222"/><path d="M1247 743h3v-3z" fill="#fff"/>
<path d="M1264.500 727h8v8h-8zM1268.500 727v8M1264.500 731h8" fill="#e0d8d8" stroke="#b03030"/><path d="M1257.500 733l3-3h6v8l-3 3h-5.500zM1257.500 733h6.500v8" fill="#e4ecf0" stroke="#444"/><path d="M1272 743h3v-3z" fill="#fff"/>
<!-- nav row 2 -->
<path d="M1187.500 749l16 7-16 7z" fill="#dcdcdc" stroke="#111" stroke-width="1.200"/><path d="M1187 756l8 0" stroke="#999"/>
<path d="M1213 763l-3-7c-1-3 2-3 3-1l1 1-1-5c0-2 2-2 3 0l1 3 0-4c0-2 2-2 3 0l0 4 2-3c1-2 3-1 2 1l-1 4 2-2c2-1 3 1 2 2l-3 6c-2 4-7 4-11 1z" fill="#e4e4e4" stroke="#222"/>
<circle cx="1240.500" cy="756" r="5.500" fill="none" stroke="#333"/><ellipse cx="1240.500" cy="756" rx="5.500" ry="2.200" fill="none" stroke="#555"/><path d="M1240.500 748v16M1233 756h15" stroke="#333"/><path d="M1238 750.500l2.500-2.500 2.500 2.500M1245.500 753.500l2.500 2.500-2.500 2.500" fill="none" stroke="#333"/>
<rect x="1257.500" y="748.500" width="11" height="11" fill="#d8d8d8" stroke="#111"/><rect x="1262.500" y="753.500" width="9.500" height="9.500" fill="none" stroke="#111"/><path d="M1260 751l5 5M1260 751h3M1260 751v3" fill="none" stroke="#333"/>

<!-- Taskbar -->
<rect y="771" width="1280" height="29" fill="url(#task)"/>
<path d="M0 771.500H1280" stroke="#3a78e8"/>
<path d="M0 771H90c8 1 12 14 12 29H0z" fill="url(#start)"/>
<g transform="skewX(-5)">
<path d="M83 778l6 1v5h-7z" fill="#e85020"/><path d="M91 780l6 1v5l-6-1z" fill="#78c040"/><path d="M81 786h7v5l-8-1z" fill="#3a88e0"/><path d="M90 787l6 1v5l-7-1z" fill="#f8c820"/>
</g>
<text x="34" y="792" textLength="44" lengthAdjust="spacingAndGlyphs" style="font-size:17px;font-weight:bold;font-style:italic;fill:#fff">Inicio</text>
<rect x="112" y="774" width="160" height="24" rx="2" fill="#1d4cb0"/>
<rect x="273" y="774" width="158" height="24" rx="2" fill="url(#tbtn)"/>
<rect x="433" y="774" width="158" height="24" rx="2" fill="url(#tbtn)"/>
<rect x="122" y="778" width="16" height="16" rx="2" fill="#3a6298"/><circle cx="130" cy="786" r="6" fill="none" stroke="#e0e8f0" stroke-width="2"/><path d="M127 785c2-2 5-1 5 0-1 2-4 1-5 3 1 1 3 1 5 0" fill="none" stroke="#fff"/>
<text x="142" y="790" textLength="114" xml:space="preserve" lengthAdjust="spacingAndGlyphs" class="w">Untitled - 3ds max 7  ...</text>
<circle cx="290" cy="785" r="7.500" fill="#2a60b0"/><path d="M283 785c0-5 6-9 10-7 5 2 6 7 4 11-2 3-6 4-9 3 4-1 6-4 4-7-2-2-5-1-6 1-1-1-2-1-3-1z" fill="#ea7a10"/>
<text x="301" y="789" textLength="111" lengthAdjust="spacingAndGlyphs" class="w">Modelado - Crear Nu...</text>
<path d="M444 778l4 14h5l3-14" fill="#e8e8d8" stroke="#8090b0"/><path d="M447 777l2 11M451 777v11M454 777l-2 11" stroke="#c83030" stroke-width="1.500"/><path d="M449 779l2 9" stroke="#30a040"/>
<text x="462" y="789" textLength="40" lengthAdjust="spacingAndGlyphs" class="w">1 - Paint</text>
<!-- Nero -->
<rect x="969" y="774" width="90" height="21" fill="#fff"/>
<text x="1002" y="784" textLength="29" lengthAdjust="spacingAndGlyphs" style="font-size:10px;font-weight:bold;fill:#666">nero</text>
<text x="992" y="793" textLength="45" lengthAdjust="spacingAndGlyphs" style="font-size:8px;fill:#777">@SEARCH</text>
<rect x="1065" y="777" width="16" height="16" rx="1" fill="#3cb03c" stroke="#70d070"/><path d="M1068 785h5v-4l5 4.500-5 4.500v-4h-5z" fill="#fff"/>
<path d="M1086 783h6l-3 4z" fill="#b8d0f0"/>
<!-- tray -->
<path d="M1108 771H1280V800H1108z" fill="url(#tray)"/>
<path d="M1108 771v29" stroke="#0a60b8"/>
<circle cx="1108" cy="785" r="8.500" fill="#5098f0" stroke="#a8d0f8"/><path d="M1111 780l-5 5 5 5" fill="none" stroke="#fff" stroke-width="2"/>
<rect x="1120" y="778" width="12" height="9" fill="#cfd8e8" stroke="#445"/><rect x="1122" y="780" width="8" height="5" fill="#3a5080"/><rect x="1121" y="788" width="8" height="3" fill="#a090c0"/><path d="M1133 778c1.500 2 1.500 4 0 6M1135.500 776c2 3 2 7 0 10" fill="none" stroke="#c0dcf8"/>
<path d="M1144.500 778l6 2v6c0 4-3 6-6 7-3-1-6-3-6-7v-6z" fill="#c02030" stroke="#e0e0e8"/><path d="M1142 783l5 5M1147 783l-5 5" stroke="#fff" stroke-width="1.500"/>
<circle cx="1161" cy="783" r="6.500" fill="#8a8e98"/><circle cx="1161" cy="783" r="2.800" fill="#222"/><path d="M1163 790c3 0 5-1 7-3" stroke="#3060a0" stroke-width="2" fill="none"/>
<path d="M1173 777l6 11 5 2 3 3-4 2-7-3-3-8z" fill="#d0d4dc" stroke="#334"/><path d="M1180 791l7 3" stroke="#a0b020" stroke-width="2"/>
<circle cx="1199.500" cy="785" r="7.500" fill="#f07010"/><circle cx="1199.500" cy="785" r="4.500" fill="none" stroke="#ffe0b0" stroke-width="2"/><path d="M1199.500 779l3 4h-6z" fill="#fff"/>
<text x="1213" y="790" textLength="53" lengthAdjust="spacingAndGlyphs" class="w">07:49 p.m.</text>
</svg>
</body></html>
